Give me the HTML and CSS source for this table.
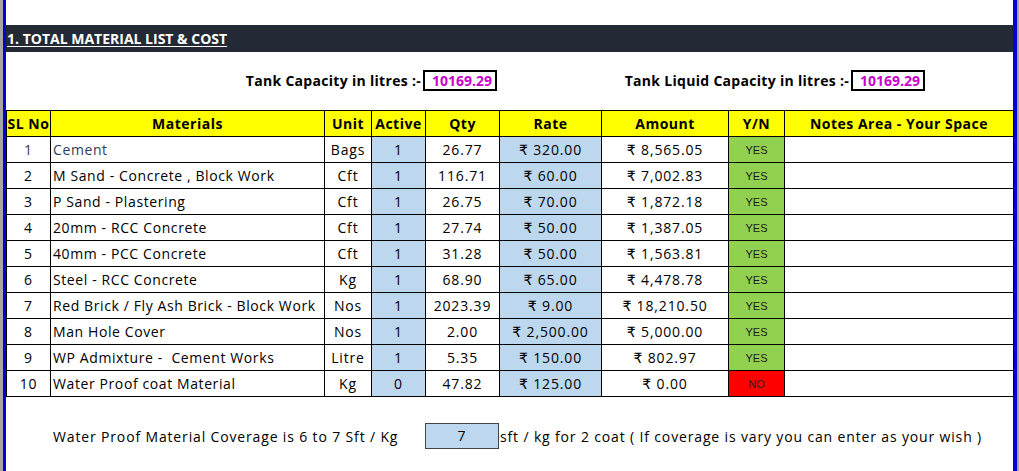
FILE: index.html
```html
<!DOCTYPE html>
<html lang="en">
<head>
<meta charset="utf-8">
<title>Total Material List &amp; Cost</title>
<link rel="stylesheet" href="styles.css">
</head>
<body>
<div class="page">
  <div class="topgap"></div>
  <div class="titlebar"><span class="title">1. TOTAL MATERIAL LIST &amp; COST</span></div>
  <div class="capacity">
    <div class="cap-label">Tank Capacity in litres :-</div>
    <div class="cap-box">10169.29</div>
    <div class="cap-label">Tank Liquid Capacity in litres :-</div>
    <div class="cap-box">10169.29</div>
  </div>
  <table class="sheet">
    <colgroup>
      <col class="c-sl"><col class="c-mat"><col class="c-unit"><col class="c-act"><col class="c-qty"><col class="c-rate"><col class="c-amt"><col class="c-yn"><col class="c-notes">
    </colgroup>
    <thead>
      <tr><th>SL No</th><th>Materials</th><th>Unit</th><th>Active</th><th>Qty</th><th>Rate</th><th>Amount</th><th>Y/N</th><th>Notes Area - Your Space</th></tr>
    </thead>
    <tbody>
      <tr class="first"><td class="tint">1</td><td class="mat tint">Cement</td><td>Bags</td><td class="blue">1</td><td>26.77</td><td class="blue">₹ 320.00</td><td>₹ 8,565.05</td><td class="yes">YES</td><td></td></tr>
      <tr><td>2</td><td class="mat">M Sand - Concrete , Block Work</td><td>Cft</td><td class="blue">1</td><td>116.71</td><td class="blue">₹ 60.00</td><td>₹ 7,002.83</td><td class="yes">YES</td><td></td></tr>
      <tr><td>3</td><td class="mat">P Sand - Plastering</td><td>Cft</td><td class="blue">1</td><td>26.75</td><td class="blue">₹ 70.00</td><td>₹ 1,872.18</td><td class="yes">YES</td><td></td></tr>
      <tr><td>4</td><td class="mat">20mm - RCC Concrete</td><td>Cft</td><td class="blue">1</td><td>27.74</td><td class="blue">₹ 50.00</td><td>₹ 1,387.05</td><td class="yes">YES</td><td></td></tr>
      <tr><td>5</td><td class="mat">40mm - PCC Concrete</td><td>Cft</td><td class="blue">1</td><td>31.28</td><td class="blue">₹ 50.00</td><td>₹ 1,563.81</td><td class="yes">YES</td><td></td></tr>
      <tr><td>6</td><td class="mat">Steel - RCC Concrete</td><td>Kg</td><td class="blue">1</td><td>68.90</td><td class="blue">₹ 65.00</td><td>₹ 4,478.78</td><td class="yes">YES</td><td></td></tr>
      <tr><td>7</td><td class="mat">Red Brick / Fly Ash Brick - Block Work</td><td>Nos</td><td class="blue">1</td><td>2023.39</td><td class="blue">₹ 9.00</td><td>₹ 18,210.50</td><td class="yes">YES</td><td></td></tr>
      <tr><td>8</td><td class="mat">Man Hole Cover</td><td>Nos</td><td class="blue">1</td><td>2.00</td><td class="blue">₹ 2,500.00</td><td>₹ 5,000.00</td><td class="yes">YES</td><td></td></tr>
      <tr><td>9</td><td class="mat">WP Admixture -&nbsp; Cement Works</td><td>Litre</td><td class="blue">1</td><td>5.35</td><td class="blue">₹ 150.00</td><td>₹ 802.97</td><td class="yes">YES</td><td></td></tr>
      <tr><td>10</td><td class="mat">Water Proof coat Material</td><td>Kg</td><td class="blue">0</td><td>47.82</td><td class="blue">₹ 125.00</td><td>₹ 0.00</td><td class="no">NO</td><td></td></tr>
    </tbody>
  </table>
  <div class="coverage">
    <div class="cov-text">Water Proof Material Coverage is 6 to 7 Sft / Kg</div>
    <div class="cov-box">7</div>
    <div class="cov-note">sft / kg for 2 coat ( If coverage is vary you can enter as your wish )</div>
  </div>
</div>
</body>
</html>
```
FILE: styles.css
```css
html, body {
  margin: 0;
  padding: 0;
}
body {
  background: #a5a5a5;
  width: 1019px;
  height: 471px;
  overflow: hidden;
  font-family: "Open Sans", "DejaVu Sans", sans-serif;
  color: #000;
}
.page {
  margin-left: 3px;
  width: 1007px;
  height: 471px;
  background: #fff;
  border-left: 3px solid #0000d4;
  border-right: 4px solid #0000d4;
}
.topgap {
  height: 25px;
}
.titlebar {
  height: 27px;
  background: #232a35;
  display: flex;
  align-items: center;
  padding-left: 1px;
}
.title {
  color: #fff;
  font-weight: 700;
  font-size: 14px;
  text-decoration: underline;
  text-underline-offset: 2px;
}
.capacity {
  display: grid;
  grid-template-columns: 417px 74px 354px 74px;
  align-items: center;
  margin-top: 18px;
  height: 21px;
}
.cap-label {
  text-align: right;
  font-weight: 700;
  font-size: 14px;
  letter-spacing: 0.3px;
  padding-right: 2px;
}
.cap-box {
  box-sizing: border-box;
  height: 21px;
  border: 2px solid #000;
  color: #cc00cc;
  font-weight: 700;
  font-size: 14px;
  text-align: right;
  padding-right: 3px;
  line-height: 17px;
}
.sheet {
  margin-top: 19px;
  border-collapse: collapse;
  table-layout: fixed;
  width: 1007px;
}
.c-sl { width: 44px; }
.c-mat { width: 274px; }
.c-unit { width: 47px; }
.c-act { width: 54px; }
.c-qty { width: 74px; }
.c-rate { width: 102px; }
.c-amt { width: 127px; }
.c-yn { width: 56px; }
.c-notes { width: 229px; }
.sheet th, .sheet td {
  border: 1px solid #000;
  height: 25px;
  padding: 0;
  text-align: center;
  white-space: nowrap;
  overflow: hidden;
}
.sheet th {
  background: #ffff00;
  font-weight: 700;
  font-size: 14px;
  letter-spacing: 0.5px;
}
.sheet td {
  font-size: 14px;
  letter-spacing: 0.85px;
}
.sheet td.mat {
  text-align: left;
  padding-left: 2px;
  letter-spacing: 0.6px;
}
.sheet td.tint {
  color: #333c55;
}
.sheet td.blue {
  background: #bdd7ee;
}
.sheet td.yes, .sheet td.no {
  font-family: "Liberation Sans", Arial, sans-serif;
  font-size: 11px;
  letter-spacing: 0;
  color: #1a1a1a;
}
.sheet td.yes {
  background: #92d050;
}
.sheet td.no {
  background: #ff0000;
  color: #222;
}
.coverage {
  display: grid;
  grid-template-columns: 44px 375px 74px auto;
  align-items: center;
  margin-top: 26px;
  height: 26px;
  font-size: 14px;
  letter-spacing: 0.85px;
}
.cov-text {
  grid-column: 2;
  padding-left: 3px;
}
.cov-box {
  box-sizing: border-box;
  height: 26px;
  border: 1px solid #444;
  background: #bdd7ee;
  text-align: center;
  line-height: 24px;
}
.cov-note {
  padding-left: 1px;
}
```
